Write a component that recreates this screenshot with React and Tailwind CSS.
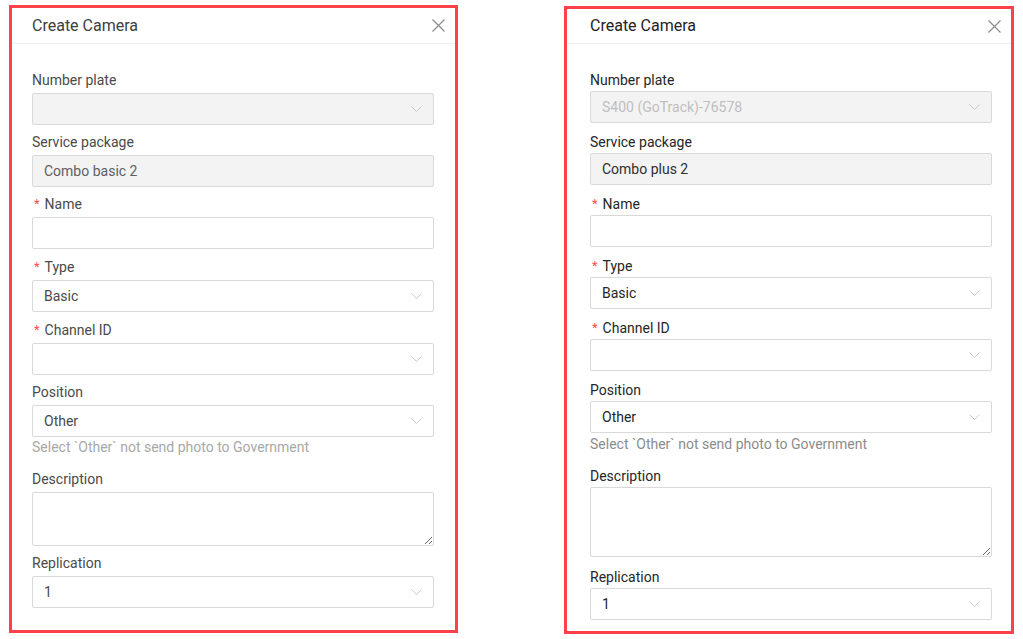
import React from "react";

const font = { fontFamily: "Roboto, 'Liberation Sans', sans-serif" };

function Chevron() {
    return (
        <svg width="11" height="6" viewBox="0 0 11 6" className="shrink-0">
            <polyline points="0.5,0.5 5.5,5.5 10.5,0.5" fill="none" stroke="#c4c4c4" strokeWidth="0.9" />
        </svg>
    );
}

function CloseIcon() {
    return (
        <svg width="13" height="13" viewBox="0 0 13 13">
            <path d="M0.5 0.5 L12.5 12.5 M12.5 0.5 L0.5 12.5" stroke="#8c8c8c" strokeWidth="1.2" fill="none" />
        </svg>
    );
}

function Label({ text, required, tone }) {
    return (
        <div className={`h-[22px] leading-[22px] text-[14px] flex items-center ${tone.label}`}>
            {required && <span className="text-[#ff4d4f] mr-[5px] ml-[2px] text-[13px]">*</span>}
            {text}
        </div>
    );
}

function Select({ value, disabled, tone }) {
    return (
        <div
            className={`h-[32px] border border-[#d9d9d9] rounded-[2px] flex items-center justify-between pl-[11px] pr-[11px] text-[14px] ${
                disabled ? "bg-[#f3f3f3] text-[#bfbfbf]" : `bg-white ${tone.value}`
            }`}
        >
            <span>{value}</span>
            <Chevron />
        </div>
    );
}

function Panel({ cfg }) {
    const t = cfg.tone;
    return (
        <div className={`border-[3px] border-[#ff4249] bg-white h-[628px] flex flex-col ${cfg.width} ${cfg.offset}`} style={font}>
            <div className={`${cfg.headH} flex items-center justify-between ${cfg.headPad} pr-[10px] border-b border-[#efefef]`}>
                <span className={`text-[16px] ${t.title}`}>Create Camera</span>
                <CloseIcon />
            </div>

            <div className={`flex flex-col ${cfg.bodyPad}`}>
                <Label text="Number plate" tone={t} />
                <div className={cfg.labelGap}></div>
                <Select value={cfg.plate} disabled tone={t} />

                <div className={cfg.rowGap}></div>
                <Label text="Service package" tone={t} />
                <div className={cfg.labelGap}></div>
                <div className={`h-[32px] border border-[#d9d9d9] rounded-[2px] bg-[#f3f3f3] flex items-center pl-[11px] text-[14px] ${t.readonly}`}>
                    {cfg.pkg}
                </div>

                <div className={cfg.rowGap}></div>
                <Label text="Name" required tone={t} />
                <div className={cfg.labelGap}></div>
                <div className="h-[32px] border border-[#d9d9d9] rounded-[2px] bg-white"></div>

                <div className={cfg.rowGapLate}></div>
                <Label text="Type" required tone={t} />
                <div className={cfg.labelGap}></div>
                <Select value="Basic" tone={t} />

                <div className={cfg.rowGapLate}></div>
                <Label text="Channel ID" required tone={t} />
                <div className={cfg.labelGap}></div>
                <Select value="" tone={t} />

                <div className={cfg.rowGapPos}></div>
                <Label text="Position" tone={t} />
                <div className={cfg.labelGap}></div>
                <Select value="Other" tone={t} />
                <div className={`text-[14px] ${cfg.helpH} ${t.help}`}>
                    Select `Other` not send photo to Government
                </div>

                <div className={cfg.helpGap}></div>
                <Label text="Description" tone={t} />
                <div className={cfg.labelGap}></div>
                <textarea
                    readOnly
                    className={`${cfg.areaH} border border-[#d9d9d9] rounded-[2px] bg-white resize-y outline-none block`}
                ></textarea>

                <div className={cfg.areaGap}></div>
                <Label text="Replication" tone={t} />
                <div className={cfg.labelGap}></div>
                <Select value="1" tone={t} />
            </div>
        </div>
    );
}

const leftPanel = {
    width: "w-[449px]",
    offset: "mt-0",
    headH: "h-[36px]",
    headPad: "pl-[20px]",
    bodyPad: "pl-[20px] pr-[21px] pt-[25px]",
    labelGap: "h-[2px]",
    rowGap: "h-[6px]",
    rowGapLate: "h-[7px]",
    rowGapPos: "h-[6px]",
    helpH: "h-[20px] leading-[20px]",
    helpGap: "h-[11px]",
    areaH: "h-[54px]",
    areaGap: "h-[6px]",
    plate: "",
    pkg: "Combo basic 2",
    tone: {
        title: "text-[#404040]",
        label: "text-[#4a4a4a]",
        value: "text-[#4a4a4a]",
        readonly: "text-[#5f5f5f]",
        help: "text-[#a8a8a8]",
    },
};

const rightPanel = {
    width: "w-[450px]",
    offset: "mt-[1px]",
    headH: "h-[35px]",
    headPad: "pl-[23px]",
    bodyPad: "pl-[23px] pr-[19px] pt-[25px]",
    labelGap: "h-0",
    rowGap: "h-[8px]",
    rowGapLate: "h-[8px]",
    rowGapPos: "h-[8px]",
    helpH: "h-[22px] leading-[22px]",
    helpGap: "h-[10px]",
    areaH: "h-[70px]",
    areaGap: "h-[9px]",
    plate: "S400 (GoTrack)-76578",
    pkg: "Combo plus 2",
    tone: {
        title: "text-[#222222]",
        label: "text-[#262626]",
        value: "text-[#262626]",
        readonly: "text-[#2e2e2e]",
        help: "text-[#8c8c8c]",
    },
};

export default function App() {
    return (
        <div className="w-[1023px] h-[639px] bg-white flex items-start pt-[5px] pl-[9px] gap-[106px]">
            <Panel cfg={leftPanel} />
            <Panel cfg={rightPanel} />
        </div>
    );
}
